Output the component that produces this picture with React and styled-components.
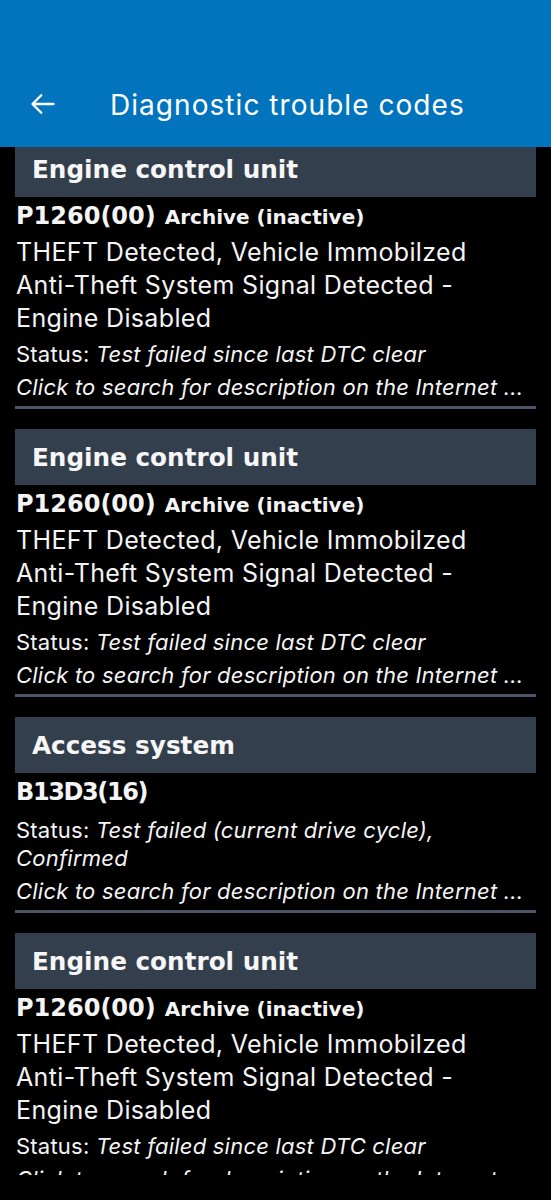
import React from "react";
import styled, { createGlobalStyle } from "styled-components";

const Global = createGlobalStyle`
  html, body { margin: 0; padding: 0; background: #000; }
  body { font-family: Inter, Roboto, "Noto Sans", sans-serif; color: #f4f4f4; }
  * { box-sizing: border-box; }
`;

const Screen = styled.div`
  width: 551px;
  height: 1200px;
  display: flex;
  flex-direction: column;
  background: #000;
  overflow: hidden;
`;

const AppBar = styled.header`
  flex: 0 0 147px;
  background: #0274be;
  display: flex;
  align-items: flex-end;
  padding: 0 0 24px 28px;
  position: relative;
  z-index: 1;
`;

const BackButton = styled.button`
  width: 30px;
  height: 30px;
  padding: 0;
  border: 0;
  background: none;
  display: flex;
  align-items: center;
  justify-content: center;
  color: #fff;
  margin-right: 52px;
  margin-bottom: 4px;
`;

const Title = styled.h1`
  margin: 0;
  font-size: 28px;
  font-weight: 400;
  line-height: 36px;
  letter-spacing: 1.05px;
  color: #fff;
`;

const ListViewport = styled.main`
  flex: 0 0 1028px;
  overflow: hidden;
`;

const List = styled.div`
  margin-top: -6px;
  padding: 0 15px;
  display: flex;
  flex-direction: column;
  gap: 20px;
`;

const Item = styled.section`
  display: flex;
  flex-direction: column;
`;

const UnitHeader = styled.h2`
  margin: 0;
  height: 56px;
  background: #343f4e;
  display: flex;
  align-items: center;
  padding-left: 17px;
  font-family: "DejaVu Sans", Inter, sans-serif;
  font-size: 24.7px;
  font-weight: 700;
  color: #f6f6f6;
`;

const CodeRow = styled.div`
  display: flex;
  align-items: baseline;
  gap: 9px;
  line-height: 38px;
  padding-left: 1px;
  font-family: "DejaVu Sans", Inter, sans-serif;
  font-weight: 700;
`;

const Code = styled.span`
  font-size: 24px;
  letter-spacing: ${(p) => (p.$tight ? "-1.4px" : "0")};
`;

const State = styled.span`
  font-size: 20px;
`;

const Description = styled.p`
  margin: 0 0 0 1px;
  font-size: 25px;
  line-height: 33px;
  letter-spacing: 0.35px;
`;

const Line = styled.p`
  margin: 5px 0 0 1px;
  font-size: 22px;
  line-height: 28px;
  letter-spacing: 0.22px;
  font-style: ${(p) => (p.$italic ? "italic" : "normal")};
  white-space: ${(p) => (p.$nowrap ? "nowrap" : "normal")};
`;

const Em = styled.em`
  font-style: italic;
`;

const Divider = styled.hr`
  margin: 5px 0 0;
  border: 0;
  height: 3px;
  background: #4b5566;
`;

const BottomBar = styled.footer`
  flex: 1;
  background: #000;
`;

const ArrowBack = () => (
  <svg width="28" height="28" viewBox="0 0 24 24" fill="none" stroke="currentColor" strokeWidth="2" strokeLinecap="round" strokeLinejoin="round">
    <path d="M21 12H3.5" />
    <path d="M10.5 4.5L3 12l7.5 7.5" />
  </svg>
);

const items = [
  {
    unit: "Engine control unit",
    code: "P1260(00)",
    state: "Archive (inactive)",
    desc: ["THEFT Detected, Vehicle Immobilzed", "Anti-Theft System Signal Detected -", "Engine Disabled"],
    status: "Test failed since last DTC clear",
  },
  {
    unit: "Engine control unit",
    code: "P1260(00)",
    state: "Archive (inactive)",
    desc: ["THEFT Detected, Vehicle Immobilzed", "Anti-Theft System Signal Detected -", "Engine Disabled"],
    status: "Test failed since last DTC clear",
  },
  {
    unit: "Access system",
    code: "B13D3(16)",
    tight: true,
    status: "Test failed (current drive cycle), Confirmed",
  },
  {
    unit: "Engine control unit",
    code: "P1260(00)",
    state: "Archive (inactive)",
    desc: ["THEFT Detected, Vehicle Immobilzed", "Anti-Theft System Signal Detected -", "Engine Disabled"],
    status: "Test failed since last DTC clear",
  },
];

export default function App() {
  return (
    <>
      <Global />
      <Screen>
        <AppBar>
          <BackButton aria-label="Back">
            <ArrowBack />
          </BackButton>
          <Title>Diagnostic trouble codes</Title>
        </AppBar>
        <ListViewport>
          <List>
            {items.map((it, i) => (
              <Item key={i}>
                <UnitHeader>{it.unit}</UnitHeader>
                <CodeRow>
                  <Code $tight={it.tight}>{it.code}</Code>
                  {it.state && <State>{it.state}</State>}
                </CodeRow>
                {it.desc && (
                  <Description>
                    {it.desc.map((d, j) => (
                      <React.Fragment key={j}>
                        {d}
                        {j < it.desc.length - 1 && <br />}
                      </React.Fragment>
                    ))}
                  </Description>
                )}
                <Line>
                  Status: <Em>{it.status}</Em>
                </Line>
                <Line $italic $nowrap>Click to search for description on the Internet ...</Line>
                <Divider />
              </Item>
            ))}
          </List>
        </ListViewport>
        <BottomBar />
      </Screen>
    </>
  );
}
